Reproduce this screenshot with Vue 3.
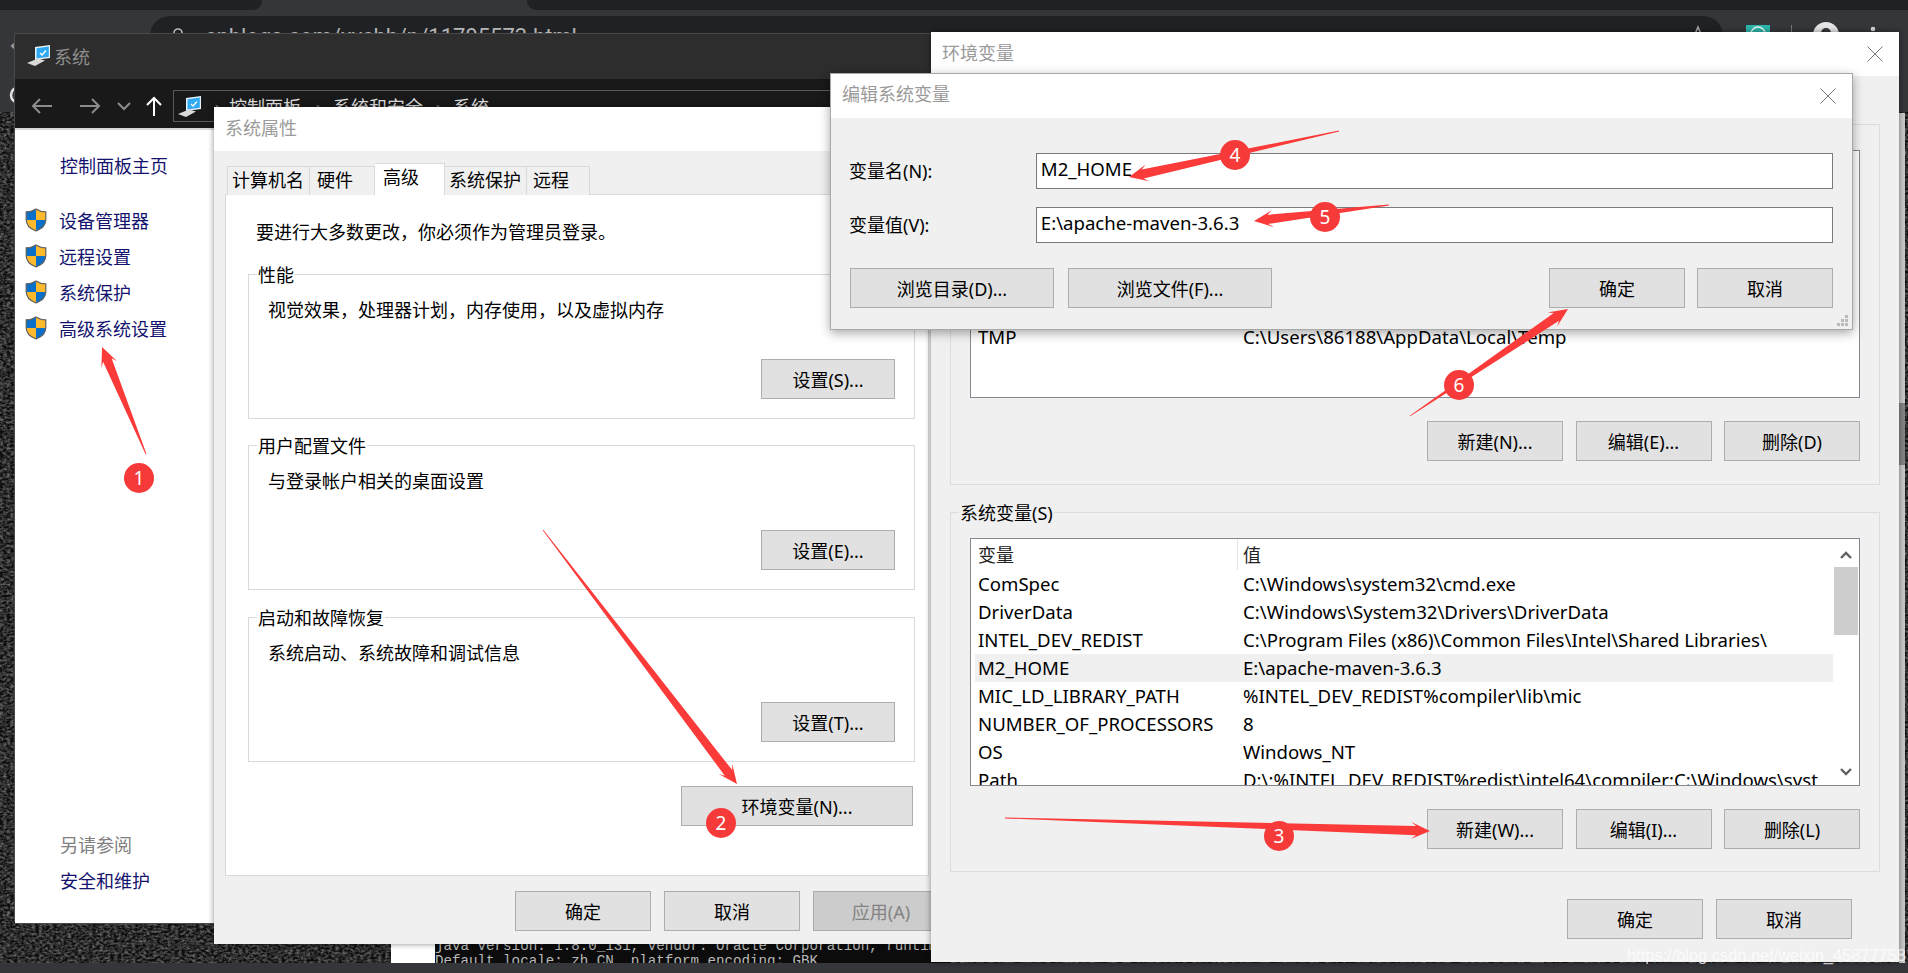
<template>
  <div class="screen">
    <div class="tabstrip">
      <div class="strip-dark strip-left"></div>
      <div class="strip-active"></div>
      <div class="strip-dark strip-right"></div>
    </div>
    <div class="toolbar">
      <svg class="tool-left" width="150" height="102" viewBox="0 0 150 102">
        <path d="M21 28 L12 36 L21 44" class="tool-line" />
        <path d="M68 28 L77 36 L68 44" class="tool-line" />
        <path d="M126 30 A 10 10 0 1 0 128 40 M127 25 V32 H120" class="tool-line" />
        <circle cx="19" cy="85" r="8" fill="none" stroke="#e4e4e4" stroke-width="2.5" />
      </svg>
      <div class="urlbar">
        <svg class="lock" width="14" height="18" viewBox="0 0 14 18">
          <path d="M3 9 V6 a4 4 0 0 1 8 0 V9" fill="none" stroke="#bbb" stroke-width="1.6" />
          <rect x="1" y="9" width="12" height="8" fill="#bbb" />
        </svg>
        <span class="url">cnblogs.com/xychh/p/11795573.html</span>
        <svg class="star" width="22" height="22" viewBox="0 0 22 22">
          <path d="M11 2 L14 9 L21 9 L15.5 13.5 L17.5 21 L11 16.5 L4.5 21 L6.5 13.5 L1 9 L8 9 Z" fill="none" stroke="#aaa" stroke-width="1.5" />
        </svg>
      </div>
      <svg class="tool-right" width="185" height="30" viewBox="0 0 185 30">
        <rect x="23" y="9" width="24" height="21" fill="#2bb7ac" />
        <path d="M28 18 A 7 7 0 0 1 42 18" fill="none" stroke="#e8f8f6" stroke-width="1.5" />
        <rect x="68" y="9" width="1" height="21" fill="#777" />
        <circle cx="103" cy="19" r="13" fill="#e6e6e6" />
        <circle cx="103" cy="17" r="5" fill="#35363a" />
        <circle cx="150" cy="13" r="2.3" fill="#d5d5d5" />
      </svg>
    </div>

    <div class="desk">
      <svg class="noise" width="100%" height="100%">
        <filter id="grain">
          <feTurbulence type="fractalNoise" baseFrequency="0.28 0.42" numOctaves="3" seed="4" />
          <feColorMatrix type="matrix" values="0 0 0 0 .32  0 0 0 0 .32  0 0 0 0 .32  1.3 0 0 0 -.42" />
        </filter>
        <rect width="100%" height="100%" filter="url(#grain)" />
      </svg>
    </div>
    <div class="taskbar"></div>

    <div class="terminal">
      <div class="term-edge"></div>
      <pre class="term-text">java version: 1.8.0_131, vendor: Oracle Corporation, runtime: C:\Java
Default locale: zh_CN, platform encoding: GBK</pre>
    </div>

    <div class="page-scroll"><div class="page-thumb"></div></div>

    <!-- 系统 -->
    <section class="win sys-win">
      <header class="sys-title">
        <svg width="24" height="21" viewBox="0 0 24 21">
          <use href="#pc-icon" />
        </svg>
        <span>系统</span>
      </header>
      <nav class="sys-nav">
        <svg class="nav-btns" width="135" height="32" viewBox="0 0 135 32">
          <path d="M4 17 H23 M11 10 L4 17 L11 24" class="nav-line" />
          <path d="M51 17 H70 M63 10 L70 17 L63 24" class="nav-line" />
          <path d="M89 14 L95 20 L101 14" class="nav-line" />
          <path d="M125 27 V9 M118 16 L125 9 L132 16" class="nav-line nav-up" />
        </svg>
        <div class="crumbs">
          <svg width="24" height="21" viewBox="0 0 24 21">
            <use href="#pc-icon" />
          </svg>
          <template v-for="c in crumbs" :key="c">
            <span class="crumb-sep">›</span>
            <span class="crumb">{{ c }}</span>
          </template>
        </div>
      </nav>
      <aside class="sidebar">
        <div class="home-link">控制面板主页</div>
        <div v-for="item in sideLinks" :key="item" class="side-link">
          <svg class="shield" width="22" height="24" viewBox="0 0 22 24">
            <clipPath id="shield-clip">
              <path d="M11 1 C8 3 4.5 3.8 1.2 3.8 V11.5 C1.2 17.5 5.5 21 11 23 C16.5 21 20.8 17.5 20.8 11.5 V3.8 C17.5 3.8 14 3 11 1 Z" />
            </clipPath>
            <g clip-path="url(#shield-clip)">
              <rect width="11" height="12" fill="#0a6fc9" />
              <rect x="11" width="11" height="12" fill="#fdb92c" />
              <rect y="12" width="11" height="12" fill="#fdb92c" />
              <rect x="11" y="12" width="11" height="12" fill="#0a6fc9" />
            </g>
            <path d="M11 1 C8 3 4.5 3.8 1.2 3.8 V11.5 C1.2 17.5 5.5 21 11 23 C16.5 21 20.8 17.5 20.8 11.5 V3.8 C17.5 3.8 14 3 11 1 Z" fill="none" stroke="#5f5f5f" stroke-width="1.2" />
          </svg>
          <span>{{ item }}</span>
        </div>
        <div class="see-also">另请参阅</div>
        <div class="home-link security">安全和维护</div>
      </aside>
    </section>

    <!-- 系统属性 -->
    <section class="win props-win">
      <header class="dlg-title">系统属性</header>
      <div class="tabs">
        <div
          v-for="t in tabs"
          :key="t.name"
          class="tab"
          :class="{ active: t.active }"
          :style="{ width: t.width + 'px' }"
        >{{ t.name }}</div>
      </div>
      <div class="panel">
        <p class="admin-note">要进行大多数更改，你必须作为管理员登录。</p>
        <div v-for="g in propGroups" :key="g.title" class="prop-group" :class="g.cls">
          <div class="legend">{{ g.title }}</div>
          <p class="group-text">{{ g.text }}</p>
          <button class="btn setting">{{ g.button }}</button>
        </div>
        <div class="env-row">
          <button class="btn env-btn">环境变量(N)...</button>
        </div>
      </div>
      <div class="props-foot">
        <button class="btn">确定</button>
        <button class="btn">取消</button>
        <button class="btn disabled">应用(A)</button>
      </div>
    </section>

    <!-- 环境变量 -->
    <section class="win env-win">
      <header class="dlg-title">
        环境变量
        <svg class="close" width="16" height="16" viewBox="0 0 16 16"><path d="M0.5 0.5 L15.5 15.5 M15.5 0.5 L0.5 15.5" /></svg>
      </header>
      <div class="env-body">
        <div class="var-group">
          <div class="legend">86188 的用户变量(U)</div>
          <div class="var-list">
            <div class="var-rows">
              <div class="var-row var-head"><span class="head-cell">变量</span><span>值</span></div>
              <div class="user-gap"></div>
              <div class="var-row"><span>TMP</span><span>C:\Users\86188\AppData\Local\Temp</span></div>
            </div>
          </div>
          <div class="var-btns">
            <button class="btn">新建(N)...</button>
            <button class="btn">编辑(E)...</button>
            <button class="btn">删除(D)</button>
          </div>
        </div>
        <div class="var-group sys-group">
          <div class="legend">系统变量(S)</div>
          <div class="var-list">
            <div class="var-rows">
              <div class="var-row var-head"><span class="head-cell">变量</span><span>值</span></div>
              <div
                v-for="r in sysVars"
                :key="r[0]"
                class="var-row"
                :class="{ picked: r[0] === 'M2_HOME' }"
              ><span>{{ r[0] }}</span><span class="var-value">{{ r[1] }}</span></div>
            </div>
            <div class="scroll">
              <svg width="26" height="28" viewBox="0 0 26 28"><path d="M8 19 L13 14 L18 19" class="scroll-arrow" /></svg>
              <div class="scroll-thumb"></div>
              <div class="scroll-rest"></div>
              <svg width="26" height="28" viewBox="0 0 26 28"><path d="M8 12 L13 17 L18 12" class="scroll-arrow" /></svg>
            </div>
          </div>
          <div class="var-btns">
            <button class="btn">新建(W)...</button>
            <button class="btn">编辑(I)...</button>
            <button class="btn">删除(L)</button>
          </div>
        </div>
        <div class="env-foot">
          <button class="btn">确定</button>
          <button class="btn">取消</button>
        </div>
      </div>
    </section>

    <!-- 编辑系统变量 -->
    <section class="win edit-win">
      <header class="dlg-title">
        编辑系统变量
        <svg class="close" width="16" height="16" viewBox="0 0 16 16"><path d="M0.5 0.5 L15.5 15.5 M15.5 0.5 L0.5 15.5" /></svg>
      </header>
      <div class="edit-body">
        <div class="edit-row">
          <label>变量名(N):</label>
          <div class="edit-input">M2_HOME</div>
        </div>
        <div class="edit-row">
          <label>变量值(V):</label>
          <div class="edit-input">E:\apache-maven-3.6.3</div>
        </div>
        <div class="edit-btns">
          <button class="btn browse">浏览目录(D)...</button>
          <button class="btn browse">浏览文件(F)...</button>
          <div class="edit-fill"></div>
          <button class="btn">确定</button>
          <button class="btn edit-cancel">取消</button>
        </div>
      </div>
      <svg class="grip" width="12" height="12" viewBox="0 0 12 12">
        <path d="M8 0h3v3H8zM4 4h3v3H4zM8 4h3v3H8zM0 8h3v3H0zM4 8h3v3H4zM8 8h3v3H8z" fill="#bbb" />
      </svg>
    </section>

    <div class="watermark">https://blog.csdn.net/weixin_45877758</div>

    <svg class="marks" width="1908" height="973" viewBox="0 0 1908 973">
      <defs>
        <g id="pc-icon">
          <polygon points="8,2 23,0 23,13 8,15" fill="#e8f3fb" />
          <polygon points="9.5,3.2 21.8,1.6 21.8,11.8 9.5,13.6" fill="#2fa9f2" />
          <path d="M13 8 L15 10 L19 5.5" fill="none" stroke="#fff" stroke-width="1.3" />
          <polygon points="0,18 11,13.5 18,15.5 8,21" fill="#d9d9d9" />
        </g>
      </defs>
      <g v-for="m in marks" :key="m.n">
        <polygon :points="arrowPoints(m)" fill="#fb3a3a" />
        <circle :cx="m.cx" :cy="m.cy" r="15" fill="#f63a3a" />
        <text :x="m.cx" :y="m.cy + 7" class="mark-num" text-anchor="middle">{{ m.n }}</text>
      </g>
    </svg>
  </div>
</template>

<script setup>
const crumbs = ['控制面板', '系统和安全', '系统']
const sideLinks = ['设备管理器', '远程设置', '系统保护', '高级系统设置']

const tabs = [
  { name: '计算机名', width: 83 },
  { name: '硬件', width: 65 },
  { name: '高级', width: 70, active: true },
  { name: '系统保护', width: 82 },
  { name: '远程', width: 63 }
]

const propGroups = [
  { title: '性能', text: '视觉效果，处理器计划，内存使用，以及虚拟内存', button: '设置(S)...', cls: 'g1' },
  { title: '用户配置文件', text: '与登录帐户相关的桌面设置', button: '设置(E)...', cls: 'g2' },
  { title: '启动和故障恢复', text: '系统启动、系统故障和调试信息', button: '设置(T)...', cls: 'g3' }
]

const sysVars = [
  ['ComSpec', 'C:\\Windows\\system32\\cmd.exe'],
  ['DriverData', 'C:\\Windows\\System32\\Drivers\\DriverData'],
  ['INTEL_DEV_REDIST', 'C:\\Program Files (x86)\\Common Files\\Intel\\Shared Libraries\\'],
  ['M2_HOME', 'E:\\apache-maven-3.6.3'],
  ['MIC_LD_LIBRARY_PATH', '%INTEL_DEV_REDIST%compiler\\lib\\mic'],
  ['NUMBER_OF_PROCESSORS', '8'],
  ['OS', 'Windows_NT'],
  ['Path', 'D:\\;%INTEL_DEV_REDIST%redist\\intel64\\compiler;C:\\Windows\\syst']
]

// red hand-drawn arrows and their numbered dots
const marks = [
  { n: 1, x1: 146, y1: 454, x2: 102, y2: 347, cx: 139, cy: 478 },
  { n: 2, x1: 543, y1: 530, x2: 737, y2: 784, cx: 721, cy: 823 },
  { n: 3, x1: 1005, y1: 818, x2: 1430, y2: 831, cx: 1279, cy: 836 },
  { n: 4, x1: 1339, y1: 131, x2: 1129, y2: 177, cx: 1235, cy: 155 },
  { n: 5, x1: 1389, y1: 205, x2: 1254, y2: 221, cx: 1325, cy: 217 },
  { n: 6, x1: 1410, y1: 416, x2: 1568, y2: 309, cx: 1459, cy: 385 }
]

function arrowPoints(m) {
  const dx = m.x2 - m.x1
  const dy = m.y2 - m.y1
  const len = Math.hypot(dx, dy)
  const ux = dx / len
  const uy = dy / len
  const at = (along, side) =>
    `${(m.x1 + ux * along - uy * side).toFixed(1)},${(m.y1 + uy * along + ux * side).toFixed(1)}`
  const neck = len - 14
  const back = len - 19
  return [
    at(0, -0.4),
    at(neck, -4.6),
    at(back, -8.5),
    at(len, 0),
    at(back, 8.5),
    at(neck, 4.6),
    at(0, 0.4)
  ].join(' ')
}
</script>

<style>
html,
body {
  margin: 0;
  background: #0d0d0d;
}
</style>

<style scoped>
.screen {
  position: relative;
  width: 1908px;
  height: 973px;
  overflow: hidden;
  display: flex;
  flex-direction: column;
  background: #0d0d0d;
  font-family: "Noto Sans", "Noto Sans CJK SC", sans-serif;
  font-size: 18px;
  color: #000;
}

.tabstrip {
  display: flex;
  height: 10px;
  background: #35363a;
}
.strip-dark {
  background: #202124;
}
.strip-left {
  width: 262px;
  border-bottom-right-radius: 9px;
}
.strip-active {
  width: 265px;
}
.strip-right {
  flex: 1;
  border-bottom-left-radius: 9px;
}

.toolbar {
  display: flex;
  height: 102px;
  background: #35363a;
}
.tool-left {
  flex: none;
}
.tool-line {
  fill: none;
  stroke: #9a9a9a;
  stroke-width: 2;
}
.urlbar {
  display: flex;
  align-items: center;
  width: 1573px;
  height: 40px;
  margin-top: 6px;
  padding-left: 21px;
  box-sizing: border-box;
  background: #202124;
  border-radius: 20px;
}
.lock {
  flex: none;
  margin-right: 20px;
}
.url {
  font-family: Roboto, sans-serif;
  font-size: 22px;
  color: #b4b4b4;
}
.star {
  margin-left: auto;
  margin-right: 14px;
}
.tool-right {
  flex: none;
  margin-top: 6px;
}

.desk {
  flex: 1;
  position: relative;
  overflow: hidden;
}
.noise {
  display: block;
}
.taskbar {
  height: 10px;
  background: #35363a;
}

.terminal {
  position: absolute;
  left: 391px;
  top: 930px;
  width: 560px;
  height: 33px;
  display: flex;
  background: #0c0c0c;
  overflow: hidden;
}
.term-edge {
  flex: none;
  width: 44px;
  background: #fff;
}
.term-text {
  margin: 0;
  padding-top: 9px;
  font-family: "Liberation Mono", monospace;
  font-size: 14.2px;
  line-height: 15px;
  color: #b9b9b9;
  white-space: pre;
}

.page-scroll {
  position: absolute;
  left: 1899px;
  top: 113px;
  width: 6px;
  height: 850px;
  background: #c9c9c9;
}
.page-thumb {
  height: 62px;
  margin-top: 290px;
  background: #858585;
}

.win {
  position: absolute;
  box-sizing: border-box;
  background: #f0f0f0;
}

.sys-win {
  left: 15px;
  top: 34px;
  width: 950px;
  height: 889px;
  background: #fff;
  box-shadow: -1px -1px 0 #4a4a4a, 0 1px 0 #4a4a4a;
}
.sys-title {
  display: flex;
  align-items: center;
  gap: 3px;
  height: 45px;
  padding-left: 12px;
  padding-bottom: 2px;
  box-sizing: border-box;
  background: #2d2d2d;
  color: #8f8f8f;
}
.sys-nav {
  display: flex;
  align-items: center;
  height: 51px;
  background: #191919;
  border-bottom: 2px solid #d8d8d8;
  box-sizing: border-box;
}
.nav-btns {
  flex: none;
  margin-left: 14px;
  margin-top: 2px;
}
.nav-line {
  fill: none;
  stroke: #8c8c8c;
  stroke-width: 2;
}
.nav-up {
  stroke: #fff;
}
.crumbs {
  display: flex;
  align-items: center;
  width: 720px;
  height: 32px;
  margin-left: 9px;
  padding-left: 4px;
  box-sizing: border-box;
  border: 1px solid #5a5a5a;
  color: #ddd;
  margin-top: 5px;
}
.crumb-sep {
  width: 30px;
  text-align: center;
  color: #777;
  font-size: 22px;
  line-height: 24px;
  padding-left: 2px;
  box-sizing: border-box;
}
.crumb:nth-of-type(2) {
  margin-left: -3px;
}
.crumb-sep:nth-of-type(3) {
  margin-left: 2px;
}

.sidebar {
  padding: 24px 0 0 45px;
  color: #13136e;
}
.home-link {
  height: 24px;
  line-height: 24px;
}
.side-link {
  display: flex;
  align-items: center;
  height: 36px;
  margin-left: -35px;
  gap: 12px;
}
.home-link + .side-link {
  margin-top: 24px;
}
.shield {
  flex: none;
}
.see-also {
  height: 24px;
  line-height: 24px;
  margin-top: 487px;
  color: #808080;
}
.security {
  margin-top: 12px;
}

.dlg-title {
  position: relative;
  height: 44px;
  padding-left: 11px;
  line-height: 42px;
  background: #fff;
  color: #9a9a9a;
}
.edit-win .dlg-title {
  line-height: 40px;
}
.close {
  position: absolute;
  top: 14px;
  right: 16px;
}
.close path {
  fill: none;
  stroke: #7a7a7a;
  stroke-width: 1;
}

.props-win {
  left: 214px;
  top: 107px;
  width: 734px;
  height: 837px;
  box-shadow: 0 0 6px rgba(0, 0, 0, 0.45);
}
.tabs {
  display: flex;
  align-items: flex-end;
  height: 30px;
  margin-top: 14px;
  padding-left: 13px;
  margin-bottom: -1px;
  position: relative;
}
.tab {
  height: 29px;
  padding-left: 4px;
  box-sizing: border-box;
  border: 1px solid #d9d9d9;
  border-bottom: 0;
  border-left-width: 0;
  line-height: 26px;
  background: #f0f0f0;
}
.tab:first-child {
  border-left-width: 1px;
}
.tab:nth-child(2) {
  padding-left: 7px;
}
.tab:last-child {
  padding-left: 6px;
}
.tab.active {
  height: 32px;
  padding-left: 8px;
  background: #fff;
  line-height: 26px;
}
.panel {
  width: 704px;
  height: 682px;
  margin-left: 11px;
  box-sizing: border-box;
  padding: 0 0 0 22px;
  border: 1px solid #d9d9d9;
  background: #fff;
}
.admin-note {
  margin: 25px 0 0 8px;
  height: 24px;
  line-height: 24px;
}
.prop-group {
  display: flex;
  flex-direction: column;
  width: 667px;
  height: 145px;
  box-sizing: border-box;
  margin-top: 26px;
  border: 1px solid #d9d9d9;
  background: #fff;
}
.prop-group.g1 {
  margin-top: 30px;
}
.prop-group.g3 {
  margin-top: 27px;
}
.legend {
  width: fit-content;
  height: 24px;
  margin: -12px 0 0 8px;
  padding: 0 1px;
  line-height: 24px;
  background: inherit;
}
.group-text {
  margin: 11px 0 0 19px;
  height: 24px;
  line-height: 24px;
}
.btn {
  flex: none;
  width: 136px;
  height: 40px;
  padding: 0;
  box-sizing: border-box;
  border: 1px solid #adadad;
  background: #e1e1e1;
  color: #000;
  font: inherit;
}
.btn.disabled {
  background: #cccccc;
  color: #838383;
}
.setting {
  align-self: flex-end;
  width: 134px;
  margin: 37px 19px 0 0;
}
.env-row {
  display: flex;
  justify-content: flex-start;
  margin: 24px 0 0 433px;
}
.env-btn {
  width: 232px;
}
.props-foot {
  display: flex;
  gap: 13px;
  margin: 15px 0 0 301px;
}

.env-win {
  left: 931px;
  top: 32px;
  width: 968px;
  height: 930px;
  box-shadow: 0 0 6px rgba(0, 0, 0, 0.45);
}
.env-body {
  padding: 48px 19px 0;
}
.var-group {
  display: flex;
  flex-direction: column;
  height: 361px;
  box-sizing: border-box;
  border: 1px solid #dcdcdc;
  background: #f0f0f0;
}
.sys-group {
  height: 360px;
  margin-top: 27px;
}
.var-list {
  display: flex;
  width: 890px;
  height: 248px;
  margin: 13px 0 0 19px;
  padding-left: 4px;
  box-sizing: border-box;
  border: 1px solid #828790;
  background: #fff;
  overflow: hidden;
}
.var-rows {
  width: 858px;
  flex: none;
}
.var-row {
  display: grid;
  grid-template-columns: 265px 1fr;
  height: 28px;
  line-height: 28px;
  padding-left: 3px;
  box-sizing: border-box;
  font-size: 18.6px;
  white-space: nowrap;
  overflow: hidden;
}
.var-head {
  height: 31px;
  line-height: 32px;
  font-size: 18px;
  color: #222;
}
.head-cell {
  width: 259px;
  border-right: 1px solid #e5e5e5;
}
.user-gap {
  height: 141px;
}
.picked {
  background: #f0f0f0;
}
.var-value {
  overflow: hidden;
}
.scroll {
  flex: 1;
  display: flex;
  flex-direction: column;
  align-items: center;
}
.scroll-arrow {
  fill: none;
  stroke: #606060;
  stroke-width: 2.4;
}
.scroll-thumb {
  width: 24px;
  height: 68px;
  background: #cdcdcd;
}
.scroll-rest {
  flex: 1;
}
.scroll svg {
  flex: none;
}
.var-btns {
  display: flex;
  justify-content: flex-end;
  gap: 12.5px;
  margin: 23px 19px 0 0;
}
.env-foot {
  display: flex;
  justify-content: flex-end;
  gap: 13px;
  margin: 27px 28px 0 0;
}

.edit-win {
  left: 830px;
  top: 73px;
  width: 1023px;
  height: 257px;
  border: 1px solid #a8a8a8;
  box-shadow: 0 3px 10px rgba(0, 0, 0, 0.35);
}
.edit-body {
  padding: 35px 19px 0 18px;
}
.edit-row {
  display: flex;
  align-items: center;
  height: 36px;
  margin-bottom: 18px;
}
.edit-row label {
  width: 187px;
  padding-bottom: 2px;
}
.edit-input {
  width: 798px;
  height: 36px;
  padding-left: 4px;
  box-sizing: border-box;
  border: 1px solid #7a7a7a;
  background: #fff;
  font-size: 18.6px;
  line-height: 30px;
}
.edit-btns {
  display: flex;
  margin: 25px 0 0 1px;
  gap: 14px;
}
.browse {
  width: 204px;
}
.edit-fill {
  flex: 1;
}
.edit-cancel {
  margin-left: -2px;
}
.grip {
  position: absolute;
  right: 3px;
  bottom: 2px;
}

.watermark {
  position: absolute;
  left: 1627px;
  top: 943px;
  font-family: "Liberation Sans", sans-serif;
  font-size: 16.4px;
  line-height: 24px;
  color: rgba(255, 255, 255, 0.75);
  white-space: nowrap;
}

.marks {
  position: absolute;
  left: 0;
  top: 0;
  pointer-events: none;
}
.mark-num {
  fill: #fff;
  font-family: "Noto Sans", sans-serif;
  font-size: 19px;
}
</style>
